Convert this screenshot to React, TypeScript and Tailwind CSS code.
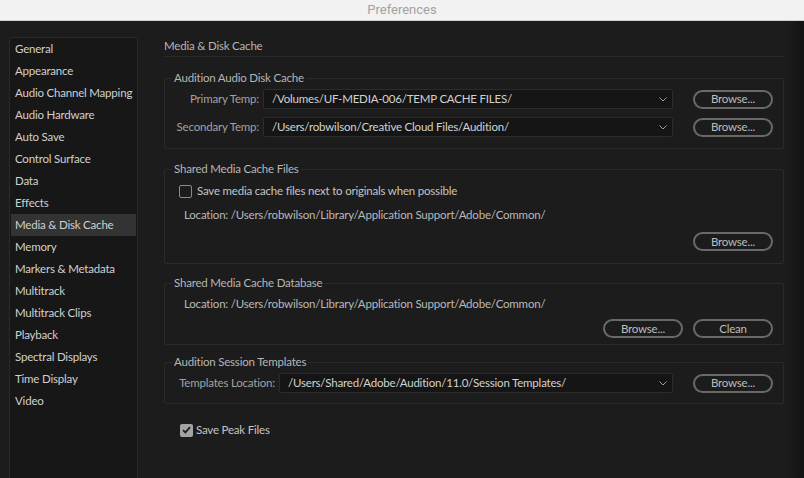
import React from "react";

const sections = [
  "General",
  "Appearance",
  "Audio Channel Mapping",
  "Audio Hardware",
  "Auto Save",
  "Control Surface",
  "Data",
  "Effects",
  "Media & Disk Cache",
  "Memory",
  "Markers & Metadata",
  "Multitrack",
  "Multitrack Clips",
  "Playback",
  "Spectral Displays",
  "Time Display",
  "Video",
];

function PathSelect({ value }: { value: string }) {
  return (
    <div className="flex-1 h-[20px] bg-[#151515] border border-[#2c2c2c] rounded-[2px] flex items-center pl-[8px] pr-[5px] text-[11.5px] text-[#d2d2d2]">
      <span className="flex-1 truncate leading-[16px]">{value}</span>
      <svg className="w-[8px] h-[5px] text-[#9a9a9a]" viewBox="0 0 8 5" fill="none" stroke="currentColor" strokeWidth={1}>
        <path d="M0.5 0.5L4 4L7.5 0.5" />
      </svg>
    </div>
  );
}

function Button({ label }: { label: string }) {
  return (
    <button className="w-[80px] h-[19px] shrink-0 rounded-full border-2 border-[#696969] text-[11.5px] leading-none text-[#bdbdbd] flex items-center justify-center">
      {label}
    </button>
  );
}

function Checkbox({ checked }: { checked?: boolean }) {
  if (checked) {
    return (
      <span className="w-[13px] h-[13px] rounded-[2px] bg-[#a3a3a3] flex items-center justify-center">
        <svg className="w-[9px] h-[8px]" viewBox="0 0 9 8" fill="none" stroke="#1c1c1c" strokeWidth={1.8}>
          <path d="M1 4.2L3.4 6.4L8 1.2" />
        </svg>
      </span>
    );
  }
  return <span className="w-[13px] h-[13px] rounded-[2px] border-[1.5px] border-[#8a8a8a]" />;
}

function Group({ title, className, children }: { title: string; className: string; children: React.ReactNode }) {
  return (
    <fieldset className={`border border-[#2b2b2b] rounded-[2px] pl-[7px] pr-[10px] ${className}`}>
      <legend className="px-[2px] text-[11.5px] leading-[16px] text-[#b6b6b6]">{title}</legend>
      {children}
    </fieldset>
  );
}

export default function App() {
  return (
    <div className="w-[804px] h-[478px] overflow-hidden bg-[#1c1c1c] flex flex-col font-['Lato',sans-serif] tracking-[-0.2px]">
      {/* Title bar */}
      <div className="h-[21px] shrink-0 bg-[#f2f2f2] border-b border-[#d0d0d0] flex items-center justify-center font-['Roboto',sans-serif] tracking-normal text-[13px] text-[#a2a2a2]">
        Preferences
      </div>

      <div className="flex flex-1 min-h-0">
        {/* Sidebar */}
        <div className="ml-[9px] mt-[16px] w-[129px] h-[470px] shrink-0 border border-[#2a2a2a] rounded-[3px] bg-[#171717] flex flex-col">
          {sections.map((s) => (
            <div
              key={s}
              className={
                s === "Media & Disk Cache"
                  ? "mx-[1px] h-[22px] leading-[22px] pl-[4px] text-[11.5px] text-[#d0d0d0] bg-[#333333] whitespace-nowrap"
                  : "h-[22px] leading-[22px] pl-[5px] text-[11.5px] text-[#d0d0d0] whitespace-nowrap"
              }
            >
              {s}
            </div>
          ))}
        </div>

        {/* Main */}
        <div className="ml-[26px] w-[620px] shrink-0 flex flex-col">
          <div className="mt-[17px] h-[19px] border-b border-[#2a2a2a] text-[11.5px] leading-[16px] text-[#b6b6b6]">
            Media &amp; Disk Cache
          </div>

          <Group title="Audition Audio Disk Cache" className="mt-[13px] pt-[3px] pb-[11px]">
            <div className="flex flex-col gap-[8px]">
              <div className="flex items-center">
                <span className="w-[91px] pr-[4px] text-right text-[11.5px] text-[#a2a2a2] whitespace-nowrap">Primary Temp:</span>
                <PathSelect value="/Volumes/UF-MEDIA-006/TEMP CACHE FILES/" />
                <div className="w-[20px]" />
                <Button label="Browse..." />
              </div>
              <div className="flex items-center">
                <span className="w-[91px] pr-[4px] text-right text-[11.5px] text-[#a2a2a2] whitespace-nowrap">Secondary Temp:</span>
                <PathSelect value="/Users/robwilson/Creative Cloud Files/Audition/" />
                <div className="w-[20px]" />
                <Button label="Browse..." />
              </div>
            </div>
          </Group>

          <Group title="Shared Media Cache Files" className="mt-[12px] pt-[4px] pb-[12px]">
            <div className="h-[20px] ml-[7px] flex items-center gap-[5px] text-[11.5px] text-[#c4c4c4]">
              <Checkbox />
              <span>Save media cache files next to originals when possible</span>
            </div>
            <div className="mt-[6px] ml-[12px] h-[16px] leading-[16px] text-[11.5px] text-[#b9b9b9]">
              Location: /Users/robwilson/Library/Application Support/Adobe/Common/
            </div>
            <div className="mt-[9px] flex justify-end">
              <Button label="Browse..." />
            </div>
          </Group>

          <Group title="Shared Media Cache Database" className="mt-[11px] pt-[5px] pb-[6px]">
            <div className="ml-[12px] h-[16px] leading-[16px] text-[11.5px] text-[#b9b9b9]">
              Location: /Users/robwilson/Library/Application Support/Adobe/Common/
            </div>
            <div className="mt-[7px] flex justify-end gap-[10px]">
              <Button label="Browse..." />
              <Button label="Clean" />
            </div>
          </Group>

          <Group title="Audition Session Templates" className="mt-[9px] pt-[3px] pb-[10px]">
            <div className="flex items-center">
              <span className="w-[107px] pr-[4px] text-right text-[11.5px] text-[#a2a2a2] whitespace-nowrap">Templates Location:</span>
              <PathSelect value="/Users/Shared/Adobe/Audition/11.0/Session Templates/" />
              <div className="w-[20px]" />
              <Button label="Browse..." />
            </div>
          </Group>

          <div className="mt-[16px] ml-[16px] h-[20px] flex items-center gap-[3px] text-[11.5px] text-[#c4c4c4]">
            <Checkbox checked />
            <span>Save Peak Files</span>
          </div>
        </div>

        <div className="flex-1" />
        <div className="w-[16px] bg-linear-to-r from-[#1c1c1c] to-[#131313]" />
      </div>
    </div>
  );
}
